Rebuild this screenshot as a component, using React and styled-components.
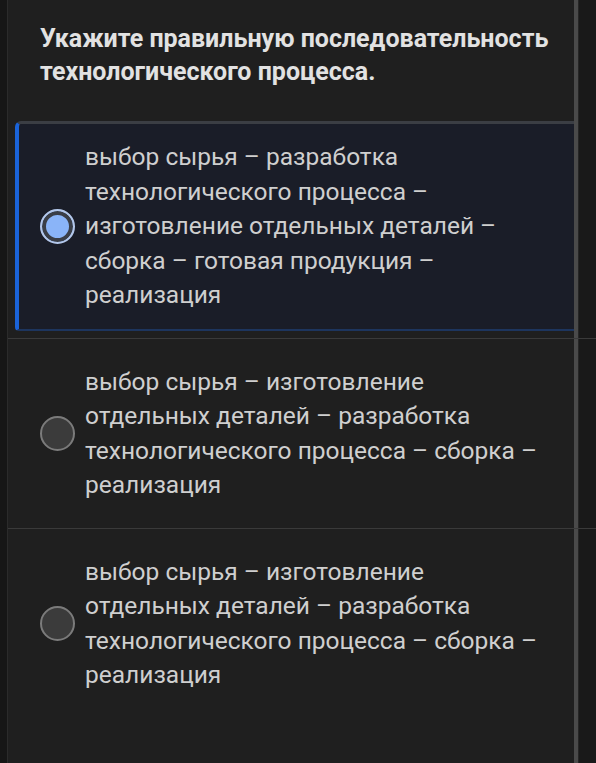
import React, { useState } from 'react';
import styled, { createGlobalStyle } from 'styled-components';

const GlobalStyle = createGlobalStyle`
  html, body {
    margin: 0;
    padding: 0;
    background: #161616;
    font-family: Roboto, "Liberation Sans", Arial, sans-serif;
  }
`;

const Shell = styled.div`
  display: flex;
  min-height: 100vh;
  background: #161616;
`;

const LeftGutter = styled.div`
  width: 7px;
  border-right: 1px solid #2b2b2b;
  flex-shrink: 0;
`;

const Card = styled.div`
  flex: 1;
  display: flex;
  flex-direction: column;
  background: #1f1f1f;
`;

const Block = styled.div`
  display: flex;
  border-bottom: ${(p) => (p.$divider ? '1px solid #3a3a3a' : 'none')};
  flex: ${(p) => (p.$grow ? 1 : 'none')};
`;

const Content = styled.div`
  width: 566px;
  flex-shrink: 0;
  box-sizing: border-box;
  padding: ${(p) => p.$pad || '0'};
`;

const Rail = styled.div`
  width: 4px;
  background: #4a4a4a;
  flex-shrink: 0;
`;

const Gutter = styled.div`
  flex: 1;
  background: #191919;
  border-left: 1px solid #262626;
`;

const Title = styled.h1`
  margin: 0;
  font-size: 25px;
  line-height: 33px;
  font-weight: 700;
  color: #e2e2e2;
`;

const OptionBox = styled.label`
  display: flex;
  align-items: center;
  gap: 10px;
  cursor: pointer;
  box-sizing: border-box;
  padding: 16px 30px 16px 21px;
  border-left: 4px solid ${(p) => (p.$selected ? '#1a63d8' : 'transparent')};
  border-top: 3px solid ${(p) => (p.$selected ? '#3b3e44' : 'transparent')};
  border-bottom: 2px solid ${(p) => (p.$selected ? '#1d355e' : 'transparent')};
  border-top-left-radius: 6px;
  border-bottom-left-radius: 4px;
  background: ${(p) => (p.$selected ? '#1a1d28' : 'transparent')};
`;

const Radio = styled.span`
  width: 35px;
  height: 35px;
  flex-shrink: 0;
  box-sizing: border-box;
  border-radius: 50%;
  border: 2px solid ${(p) => (p.$checked ? '#b3c7ea' : '#7b7b7b')};
  background: ${(p) => (p.$checked ? '#8ab4f8' : '#3b3b3b')};
  box-shadow: ${(p) => (p.$checked ? 'inset 0 0 0 4px #3a3e47' : 'none')};
`;

const OptionText = styled.span`
  font-size: 24.5px;
  line-height: 34.5px;
  color: #cfcfcf;
`;

const options = [
  'выбор сырья – разработка технологического процесса – изготовление отдельных деталей – сборка – готовая продукция – реализация',
  'выбор сырья – изготовление отдельных деталей – разработка технологического процесса – сборка – реализация',
  'выбор сырья – изготовление отдельных деталей – разработка технологического процесса – сборка – реализация',
];

export default function App() {
  const [selected, setSelected] = useState(0);

  return (
    <Shell>
      <GlobalStyle />
      <LeftGutter />
      <Card>
        <Block>
          <Content $pad="22px 10px 26px 32px">
            <Title>Укажите правильную последовательность технологического процесса.</Title>
          </Content>
          <Rail />
          <Gutter />
        </Block>
        {options.map((text, i) => (
          <Block key={i} $divider={i < options.length - 1} $grow={i === options.length - 1}>
            <Content $pad="7px 0 7px 7px">
              <OptionBox $selected={selected === i} onClick={() => setSelected(i)}>
                <Radio $checked={selected === i} />
                <OptionText>{text}</OptionText>
              </OptionBox>
            </Content>
            <Rail />
            <Gutter />
          </Block>
        ))}
      </Card>
    </Shell>
  );
}
